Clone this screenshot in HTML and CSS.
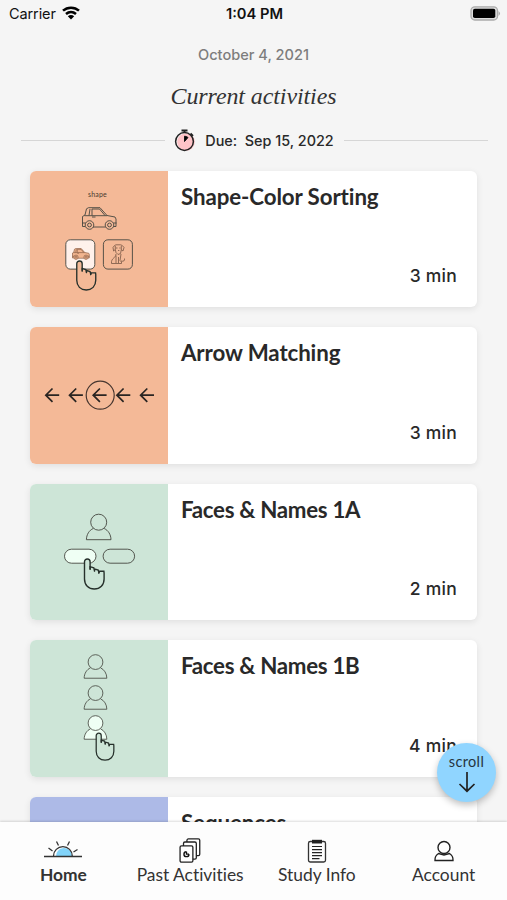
FILE: index.html
```html
<!DOCTYPE html>
<html lang="en">
<head>
<meta charset="utf-8">
<title>Current activities</title>
<link rel="stylesheet" href="styles.css">
</head>
<body>
<svg class="defs" aria-hidden="true">
  <symbol id="hand" viewBox="0 0 22 32" overflow="visible">
    <path d="M1 21V3.800a2.800 2.800 0 0 1 5.600 0V11L7 8.900 10.300 9.800 11 12.200 11.500 11 14.700 12 15.400 14.500 16.200 13.300H20.400L20.600 15V21c0 6-4 10-9.800 10S1 27 1 21Z"/>
    <path d="M6.600 8v4M11 11v2.500M15.400 13v2.500" fill="none"/>
  </symbol>
  <symbol id="person" viewBox="0 0 26 27" overflow="visible">
    <path d="M7.500 15C3.500 16.800.8 21 .7 26.200H25.300C25.200 21 22.500 16.800 18.500 15"/>
    <circle cx="13" cy="8.700" r="8"/>
  </symbol>
  <symbol id="car" viewBox="0 0 36 23" overflow="visible">
    <path d="M3.500 19.500H1v-10L3.500 8 5 1.800 7 .7H18.500L25.500 8.500 33.500 10 34.500 12V19.500H32M11.500 20H24M3 8.700H25.500M8.500 2 7.500 8.500M10.500 2V8.500M10.500 2H18L23.500 8.500M10.500 10H14M1 16H4M32 16H35"/>
    <circle cx="8" cy="18" r="4.300"/><circle cx="8" cy="18" r="1.900"/>
    <circle cx="28" cy="18" r="4.300"/><circle cx="28" cy="18" r="1.900"/>
  </symbol>
  <symbol id="arrow" viewBox="0 0 15 15" overflow="visible">
    <path d="M14.200 7.500H1M7.500 .8.800 7.500 7.500 14.200"/>
  </symbol>
</svg>
<div class="screen">
  <header class="status">
    <div class="carrier">Carrier
      <svg width="18" height="14" viewBox="0 0 18 14"><path d="M1 4.700C5.500.6 12.500.6 17 4.700M4 8C7 5.400 11 5.400 14 8" fill="none" stroke="#000" stroke-width="2.500"/><path d="M5.800 10.200Q9 7.700 12.200 10.200L9 13.500Z"/></svg>
    </div>
    <div class="clock">1:04 PM</div>
    <svg class="battery" width="31" height="15" viewBox="0 0 31 15"><rect x="1" y=".8" width="26.500" height="13.200" rx="3.800" fill="#ddd" stroke="#aaa" stroke-width="1.300"/><rect x="3" y="2.700" width="22.300" height="9.300" rx="1.800"/><path d="M28.500 5Q31.500 7.400 28.500 10Z" fill="#aaa"/></svg>
  </header>
  <p class="date">October 4, 2021</p>
  <h1>Current activities</h1>
  <div class="due">
    <i></i>
    <svg width="22" height="24" viewBox="0 0 22 24"><circle cx="12" cy="14" r="8.800" fill="#ffc4c8"/><circle cx="10.500" cy="13.500" r="8.900" fill="none" stroke="#222" stroke-width="1.500"/><path d="M7.500 2.500H13.500M10.500 2.500V4.500M16.500 5.500 19 8" fill="none" stroke="#222" stroke-width="1.800"/><path d="M10.500 13.500V8.200A5.300 5.300 0 0 1 14 9.500Z" stroke="#111"/></svg>
    <span>Due:&nbsp; Sep 15, 2022</span>
    <i></i>
  </div>
  <main>
    <article class="card">
      <svg class="art orange" viewBox="0 0 138 136.500">
        <text x="67.500" y="25.500" class="shape">shape</text>
        <use href="#car" x="51.500" y="36" width="36" height="23" class="thin"/>
        <rect x="35.800" y="68.800" width="29" height="29.300" rx="4.500" fill="#fff1eb" class="thin"/>
        <rect x="73.400" y="68.800" width="29" height="29.300" rx="4.500" class="thin"/>
        <svg x="42" y="77" width="18" height="12" viewBox="0 0 36 23" class="mini"><use href="#car" width="36" height="23"/></svg>
        <path class="thin dog" d="M84.500 74.500 83 76.500 83.600 80 85.300 78.500 86 81.500 88 83.500 90.500 82.500 91.300 78.800 93 80 94 76.500 92.300 74.500 90.500 73.800H86ZM85.300 78.500V75M91.300 78.800V75M86 83C85.500 88 81 86.500 81.500 92.500H91.500V91L90 89.500 91 83M86 84.500V92M88.500 86V92M91 90Q95 91 94.500 87.500M86 77H87.500M89.300 77H90.500M88 79.500H89.300"/>
        <use href="#hand" x="45.700" y="89" width="21.500" height="31" class="hand peach"/>
      </svg>
      <div class="info"><h2>Shape-Color Sorting</h2><p>3 min</p></div>
    </article>
    <article class="card">
      <svg class="art orange" viewBox="0 0 138 136.500">
        <g class="arrows"><use href="#arrow" x="15" y="60.700" width="15" height="15"/><use href="#arrow" x="38.700" y="60.700" width="15" height="15"/><use href="#arrow" x="62.400" y="60.700" width="15" height="15"/><use href="#arrow" x="86.100" y="60.700" width="15" height="15"/><use href="#arrow" x="109.800" y="60.700" width="15" height="15"/></g>
        <circle cx="70.200" cy="68.200" r="14" fill="none" stroke="#46362f" stroke-width="1.200"/>
      </svg>
      <div class="info"><h2>Arrow Matching</h2><p>3 min</p></div>
    </article>
    <article class="card">
      <svg class="art green" viewBox="0 0 138 136.500">
        <use href="#person" x="55.700" y="29.500" width="26" height="27" class="thin"/>
        <rect x="34.500" y="65.200" width="31.500" height="14" rx="7" fill="#effff4" class="thin"/>
        <rect x="73.100" y="65.200" width="31.500" height="14" rx="7" class="thin"/>
        <use href="#hand" x="53.500" y="74" width="22" height="32" class="hand mint"/>
      </svg>
      <div class="info"><h2 class="tight">Faces &amp; Names 1A</h2><p>2 min</p></div>
    </article>
    <article class="card">
      <svg class="art green" viewBox="0 0 138 136.500">
        <use href="#person" x="53.500" y="14" width="24" height="25" class="thin"/>
        <use href="#person" x="53.500" y="45" width="24" height="25" class="thin"/>
        <use href="#person" x="53.500" y="75" width="24" height="25" class="thin" fill="#effff4"/>
        <use href="#hand" x="65.300" y="92.300" width="19.800" height="28.800" class="hand mint"/>
      </svg>
      <div class="info"><h2 class="tight">Faces &amp; Names 1B</h2><p>4 min</p></div>
    </article>
    <article class="card">
      <svg class="art blue" viewBox="0 0 138 136.500"></svg>
      <div class="info"><h2>Sequences</h2></div>
    </article>
  </main>
  <button class="scroll">scroll
    <svg width="18" height="22" viewBox="0 0 18 22"><path d="M9 1V20M1.500 13 9 20.200 16.500 13" fill="none" stroke="#222" stroke-width="1.700"/></svg>
  </button>
  <nav>
    <a class="active"><svg width="40" height="26" viewBox="0 0 40 26"><path d="M13 18.500a8 8 0 0 1 16-1v1Z" fill="#82d4fa"/><path d="M1 18.500H39M10.500 18A9.300 9.300 0 0 1 29.300 18M5.500 10 9.500 13M13.500 3.500 15.500 7.500M26.500 3.500 24.500 7.500M34.500 11.500 30.500 14" fill="none" stroke="#333" stroke-width="1.300"/></svg>Home</a>
    <a><svg width="24" height="28" viewBox="0 0 24 28"><g fill="#fff" stroke="#222" stroke-width="1.400"><rect x="8.700" y="1" width="13.800" height="18" rx="1.500"/><rect x="5" y="4.300" width="13.800" height="18.500" rx="1.500"/><rect x="1.300" y="8.500" width="13.800" height="17.500" rx="1.500"/></g><path d="M8.200 14.700A2.700 2.700 0 1 0 10.900 17.400M8.200 14.700V17.400H10.900" fill="none" stroke="#111" stroke-width="1.500"/></svg>Past Activities</a>
    <a><svg width="20" height="26" viewBox="0 0 20 26"><rect x="1.500" y="3.500" width="17" height="20.500" rx="1.800" fill="none" stroke="#333" stroke-width="1.300"/><path d="M5 1.800H15V5.500H5Z" fill="#222"/><path d="M5 8.500H15M5 11.600H15M5 14.600H15M5 17.600H15M5 20.600H12.500" stroke="#222" stroke-width="1.200"/></svg>Study Info</a>
    <a><svg width="22" height="26" viewBox="0 0 22 26"><g fill="#fff" stroke="#222" stroke-width="1.400"><path d="M5.500 15.500C3 17 1.800 19.500 2 22.500H20C20.200 19.500 19 17 16.500 15.500L11 17Z"/><circle cx="11" cy="9.500" r="6"/></g></svg>Account</a>
  </nav>
</div>
</body>
</html>
```
FILE: styles.css
```css
* { box-sizing: border-box; margin: 0; }
body { background: #f5f5f5; color: #292929; font-family: Lato, sans-serif; font-variant-ligatures: none; }
.defs { position: absolute; width: 0; height: 0; }
.screen { position: relative; height: 900px; overflow: hidden; display: flex; flex-direction: column; }
.status { display: grid; grid-template-columns: 1fr auto 1fr; align-items: center; height: 27px; padding: 0 7px 0 9px; font: 14.500px Inter, sans-serif; color: #111; flex: none; }
.carrier { display: flex; align-items: center; gap: 6px; letter-spacing: -.1px; }
.carrier svg { margin-top: -2px; }
.clock { font-weight: 600; font-size: 14.700px; }
.battery { justify-self: end; margin-top: -1px; margin-right: -1px; }
.date { height: 20px; margin-top: 18px; text-align: center; font: 500 14.600px/20px Inter, sans-serif; color: #7d7d7d; }
h1 { height: 32px; margin-top: 15px; text-align: center; font: italic 400 24px/32px "Liberation Serif", serif; letter-spacing: -.1px; color: #333; }
.due { display: flex; align-items: center; height: 24px; margin: 16px 19px 0 21px; font: 500 14.400px Inter, sans-serif; flex: none; }
.due i { flex: 1; height: 1px; background: #d6d6d6; }
.due svg { margin: 0 9px 0 9px; }
.due span { margin-right: 10px; }
main { display: flex; flex-direction: column; gap: 20px; padding: 19px 30px 0; flex: 1; min-height: 0; overflow: hidden; }
.card { display: flex; height: 136.400px; flex: none; background: #fff; border-radius: 6px; box-shadow: 0 2px 7px rgba(0,0,0,.09); overflow: hidden; }
.art { width: 138px; height: 136.500px; flex: none; fill: none; }
.orange { background: #f4b997; }
.green { background: #cde5d7; }
.blue { background: #adbae7; }
.info { flex: 1; display: flex; flex-direction: column; justify-content: space-between; padding: 12px 20px 18px 13px; }
h2 { font-size: 22.300px; line-height: 28px; font-weight: 700; white-space: nowrap; letter-spacing: -.1px; }
.tight { letter-spacing: -.3px; }
.info p { align-self: flex-end; font: 500 17.500px/26px Inter, sans-serif; letter-spacing: .25px; }
.thin { stroke: #45463f; stroke-width: .9; }
.mini { fill: #f1b48f; stroke: #8d6047; stroke-width: 1.400; }
.dog { stroke: #765544; stroke-width: .8; }
.shape { fill: #49392f; font-size: 7px; text-anchor: middle; letter-spacing: .2px; }
.hand { stroke: #26302b; stroke-width: 1.400; }
.peach { fill: #f4b997; }
.mint { fill: #cde5d7; }
.arrows { stroke: #2a2522; stroke-width: 1.700; }
.scroll { position: absolute; left: 437px; top: 743px; width: 59px; height: 59px; padding: 0; border: 0; border-radius: 50%; background: #90d5ff; box-shadow: 0 3px 7px rgba(0,0,0,.25); color: #26343c; font: 14.500px/17px Lato, sans-serif; letter-spacing: .35px; display: flex; flex-direction: column; align-items: center; justify-content: center; gap: 1px; }
nav { position: relative; display: grid; grid-template-columns: repeat(4, 1fr); height: 78px; flex: none; background: #fdfdfd; box-shadow: 0 -1px 2px rgba(0,0,0,.14); }
nav a { display: flex; flex-direction: column; align-items: center; font-size: 17.400px; line-height: 22px; padding-top: 16px; color: #333; white-space: nowrap; }
nav svg { height: 26px; }
nav .active { font-weight: 700; }
```
